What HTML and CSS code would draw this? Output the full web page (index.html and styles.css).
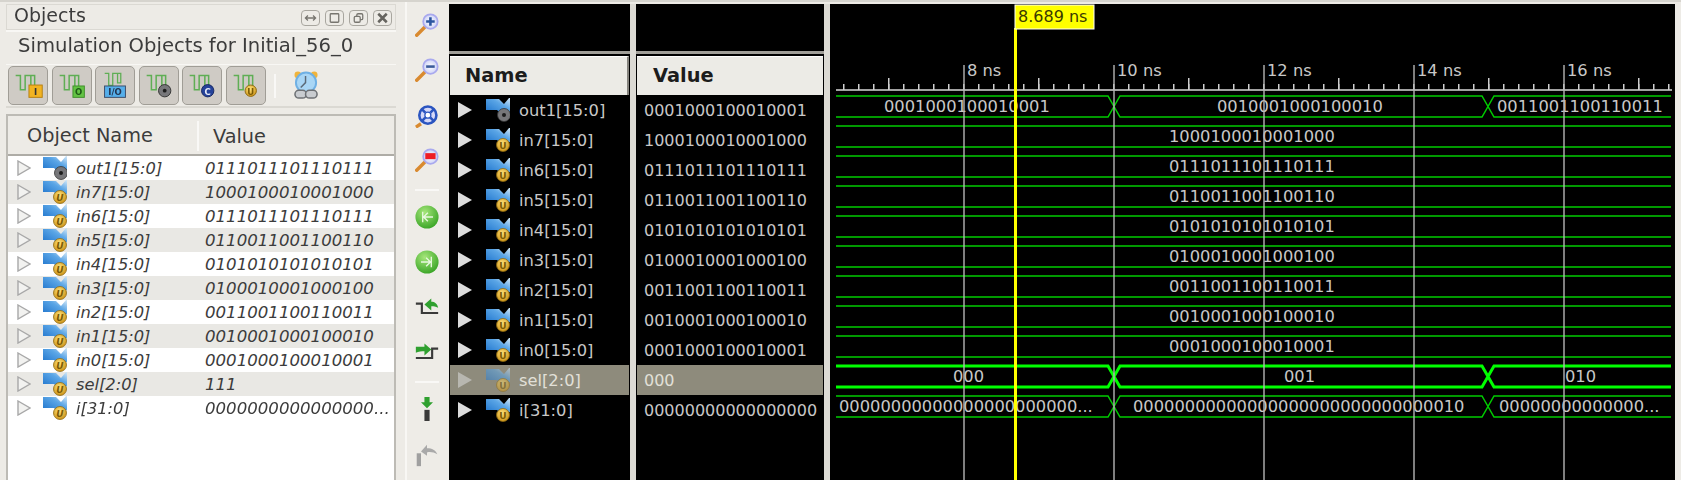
FILE: index.html
```html
<!DOCTYPE html>
<html lang="en">
  <head>
    <meta charset="UTF-8" />
    <title>Objects - waveform</title>
    <link rel="stylesheet" href="styles.css">
  </head>
  <body>
    <div class="app">
      <!-- Objects panel -->
      <section class="objects">
        <header class="title-bar">
          <span class="title">Objects</span>
          <div class="win-btns">
            <button class="win-btn">
              <svg viewBox="0 0 20 16"><path d="M4 8H16M7 5L4 8L7 11M13 5L16 8L13 11" fill="none" stroke="#77756f" stroke-width="1.5" /></svg>
            </button>
            <button class="win-btn">
              <svg viewBox="0 0 20 16"><rect x="5" y="3" width="10" height="10" rx="1" fill="none" stroke="#77756f" stroke-width="1.5" /></svg>
            </button>
            <button class="win-btn">
              <svg viewBox="0 0 20 16"><rect x="8" y="3" width="7" height="7" rx="1.5" fill="none" stroke="#77756f" stroke-width="1.5" /><rect x="5" y="6" width="7" height="7" rx="1.5" fill="#edebe6" stroke="#77756f" stroke-width="1.5" /></svg>
            </button>
            <button class="win-btn">
              <svg viewBox="0 0 20 16"><path d="M5 3L15 13M15 3L5 13" fill="none" stroke="#66645f" stroke-width="3" /></svg>
            </button>
          </div>
        </header>
        <div class="subtitle">Simulation Objects for Initial_56_0</div>

        <div class="filter-bar">
          <button class="filter-btn">
            <svg viewBox="0 0 40 39">
              <use href="#wave-mark" x="6" y="7" width="30" height="26" />
              <rect x="21" y="19" width="14" height="13" fill="#f2b321" stroke="#b57f10" />
              <text x="28" y="30" class="badge-text" fill="#333">I</text>
            </svg>
          </button>
          <button class="filter-btn">
            <svg viewBox="0 0 40 39">
              <use href="#wave-mark" x="6" y="7" width="30" height="26" />
              <rect x="21" y="20" width="12" height="12" fill="#63c344" stroke="#3f8e2a" />
              <text x="27" y="30" class="badge-text" fill="#1f5a16">O</text>
            </svg>
          </button>
          <button class="filter-btn">
            <svg viewBox="0 0 40 39">
              <use href="#wave-mark" x="6" y="5" width="30" height="22" />
              <rect x="9" y="20" width="22" height="12" fill="#55aeea" stroke="#3a4a66" />
              <text x="20" y="30" class="badge-text" fill="#23334f">I/O</text>
            </svg>
          </button>
          <button class="filter-btn">
            <svg viewBox="0 0 40 39">
              <use href="#wave-mark" x="6" y="7" width="30" height="26" />
              <circle cx="26" cy="25" r="6.5" fill="#77777a" stroke="#333" />
              <circle cx="26" cy="25" r="2" fill="#1c1c1c" />
            </svg>
          </button>
          <button class="filter-btn">
            <svg viewBox="0 0 40 39">
              <use href="#wave-mark" x="6" y="7" width="30" height="26" />
              <circle cx="26" cy="25" r="6.5" fill="#25429a" stroke="#15265f" />
              <text x="26" y="29" class="badge-text" fill="#e8ecf8">C</text>
            </svg>
          </button>
          <button class="filter-btn">
            <svg viewBox="0 0 40 39">
              <use href="#wave-mark" x="6" y="7" width="30" height="26" />
              <circle cx="25" cy="25" r="6" fill="url(#gold-fill)" stroke="#8d6a12" />
              <text x="25" y="29" class="badge-text" fill="#7a5a05">U</text>
            </svg>
          </button>
          <span class="filter-sep"></span>
          <svg class="alarm" viewBox="0 0 26 32">
            <circle cx="4" cy="5" r="3.5" fill="#f0b43c" />
            <circle cx="21" cy="5" r="3.5" fill="#f0b43c" />
            <circle cx="12.5" cy="13" r="10.5" fill="#a9d6f5" stroke="#6fb0e4" stroke-width="2" />
            <path d="M12 6V13L7 18" fill="none" stroke="#5b6a78" stroke-width="1.5" />
            <rect x="1" y="21" width="12" height="8" rx="4" fill="#c9ccd0" stroke="#6d7074" stroke-width="1.6" />
            <rect x="12" y="21" width="12" height="8" rx="4" fill="#c9ccd0" stroke="#6d7074" stroke-width="1.6" />
          </svg>
        </div>

        <div class="obj-table">
          <div class="obj-head">
            <span class="obj-head-name">Object Name</span>
            <span class="obj-head-value">Value</span>
          </div>
          <ul class="obj-list">
            <li class="obj-row"><svg class="twisty"><use href="#twisty-hollow" /></svg><svg class="sig"><use href="#sig-out" /></svg><span class="obj-name">out1[15:0]</span><span class="obj-value">0111011101110111</span></li>
            <li class="obj-row"><svg class="twisty"><use href="#twisty-hollow" /></svg><svg class="sig"><use href="#sig-u" /></svg><span class="obj-name">in7[15:0]</span><span class="obj-value">1000100010001000</span></li>
            <li class="obj-row"><svg class="twisty"><use href="#twisty-hollow" /></svg><svg class="sig"><use href="#sig-u" /></svg><span class="obj-name">in6[15:0]</span><span class="obj-value">0111011101110111</span></li>
            <li class="obj-row"><svg class="twisty"><use href="#twisty-hollow" /></svg><svg class="sig"><use href="#sig-u" /></svg><span class="obj-name">in5[15:0]</span><span class="obj-value">0110011001100110</span></li>
            <li class="obj-row"><svg class="twisty"><use href="#twisty-hollow" /></svg><svg class="sig"><use href="#sig-u" /></svg><span class="obj-name">in4[15:0]</span><span class="obj-value">0101010101010101</span></li>
            <li class="obj-row"><svg class="twisty"><use href="#twisty-hollow" /></svg><svg class="sig"><use href="#sig-u" /></svg><span class="obj-name">in3[15:0]</span><span class="obj-value">0100010001000100</span></li>
            <li class="obj-row"><svg class="twisty"><use href="#twisty-hollow" /></svg><svg class="sig"><use href="#sig-u" /></svg><span class="obj-name">in2[15:0]</span><span class="obj-value">0011001100110011</span></li>
            <li class="obj-row"><svg class="twisty"><use href="#twisty-hollow" /></svg><svg class="sig"><use href="#sig-u" /></svg><span class="obj-name">in1[15:0]</span><span class="obj-value">0010001000100010</span></li>
            <li class="obj-row"><svg class="twisty"><use href="#twisty-hollow" /></svg><svg class="sig"><use href="#sig-u" /></svg><span class="obj-name">in0[15:0]</span><span class="obj-value">0001000100010001</span></li>
            <li class="obj-row"><svg class="twisty"><use href="#twisty-hollow" /></svg><svg class="sig"><use href="#sig-u" /></svg><span class="obj-name">sel[2:0]</span><span class="obj-value">111</span></li>
            <li class="obj-row"><svg class="twisty"><use href="#twisty-hollow" /></svg><svg class="sig"><use href="#sig-u" /></svg><span class="obj-name">i[31:0]</span><span class="obj-value">0000000000000000...</span></li>
          </ul>
        </div>
      </section>

      <!-- wave toolbar -->
      <nav class="wave-tools">
        <svg class="tool" viewBox="0 0 28 28"><use href="#lens" width="28" height="28" /><path d="M13 10H23M18 5V15" stroke="#2b55a0" stroke-width="3" /></svg>
        <svg class="tool" viewBox="0 0 28 28"><use href="#lens" width="28" height="28" /><path d="M13 10H23" stroke="#3b5b9a" stroke-width="3" /></svg>
        <svg class="tool" viewBox="0 0 28 28">
          <line x1="1" y1="27" x2="7" y2="23" stroke="#d98a30" stroke-width="4" />
          <circle cx="15" cy="13" r="10" fill="#d5d8f8" stroke="#2b55c0" stroke-width="3" />
          <circle cx="15" cy="13" r="3.5" fill="#fff" stroke="#2b55c0" stroke-width="1.5" />
          <path d="M8 6L12 10M22 6L18 10M8 20L12 16M22 20L18 16" stroke="#2b55c0" stroke-width="3" />
        </svg>
        <svg class="tool" viewBox="0 0 28 28"><use href="#lens" width="28" height="28" /><rect x="12" y="6" width="12" height="7" fill="#ee1c24" /></svg>
        <span class="tool-sep"></span>
        <svg class="tool" viewBox="0 0 28 28"><circle cx="14" cy="14" r="13.5" fill="url(#green-fill)" /><path d="M9 8V20M21 14H10M15 9L10 14L15 19" fill="none" stroke="#e8f8df" stroke-width="1.6" /></svg>
        <svg class="tool" viewBox="0 0 28 28"><circle cx="14" cy="14" r="13.5" fill="url(#green-fill)" /><path d="M19 8V20M7 14H18M13 9L18 14L13 19" fill="none" stroke="#e8f8df" stroke-width="1.6" /></svg>
        <svg class="tool" viewBox="0 0 28 28">
          <path d="M1 10H8V21H27" fill="none" stroke="#3a3a3a" stroke-width="2.5" />
          <path d="M11 11L19 4V8C23 8 26 10 27 15C24 13 22 13 19 13V18Z" fill="#2fa02f" />
        </svg>
        <svg class="tool" viewBox="0 0 28 28">
          <path d="M1 21H20V10H27" fill="none" stroke="#3a3a3a" stroke-width="2.5" />
          <path d="M19 11L11 4V8H1V15C4 13 8 13 11 13V18Z" fill="#2fa02f" />
        </svg>
        <span class="tool-sep"></span>
        <svg class="tool" viewBox="0 0 28 28">
          <path d="M11 0H17V6H21L14 13L7 6H11Z" fill="#2fa02f" />
          <rect x="11" y="15" width="6" height="13" fill="#3a3a3a" />
        </svg>
        <svg class="tool" viewBox="0 0 28 28">
          <rect x="2" y="12" width="5" height="15" fill="#a0a0a0" />
          <path d="M7 10L14 2V6C20 6 24 8 26 13C22 11 18 10 14 11V15Z" fill="#a9a9a9" />
        </svg>
      </nav>

      <!-- wave window -->
      <section class="wave-window">
        <div class="wave-col name-col">
          <div class="col-top"></div>
          <div class="col-head">Name</div>
          <ul class="wave-list">
            <li class="wave-row"><svg class="twisty"><use href="#twisty-solid" /></svg><svg class="sig"><use href="#sig-out" /></svg><span>out1[15:0]</span></li>
            <li class="wave-row"><svg class="twisty"><use href="#twisty-solid" /></svg><svg class="sig"><use href="#sig-u" /></svg><span>in7[15:0]</span></li>
            <li class="wave-row"><svg class="twisty"><use href="#twisty-solid" /></svg><svg class="sig"><use href="#sig-u" /></svg><span>in6[15:0]</span></li>
            <li class="wave-row"><svg class="twisty"><use href="#twisty-solid" /></svg><svg class="sig"><use href="#sig-u" /></svg><span>in5[15:0]</span></li>
            <li class="wave-row"><svg class="twisty"><use href="#twisty-solid" /></svg><svg class="sig"><use href="#sig-u" /></svg><span>in4[15:0]</span></li>
            <li class="wave-row"><svg class="twisty"><use href="#twisty-solid" /></svg><svg class="sig"><use href="#sig-u" /></svg><span>in3[15:0]</span></li>
            <li class="wave-row"><svg class="twisty"><use href="#twisty-solid" /></svg><svg class="sig"><use href="#sig-u" /></svg><span>in2[15:0]</span></li>
            <li class="wave-row"><svg class="twisty"><use href="#twisty-solid" /></svg><svg class="sig"><use href="#sig-u" /></svg><span>in1[15:0]</span></li>
            <li class="wave-row"><svg class="twisty"><use href="#twisty-solid" /></svg><svg class="sig"><use href="#sig-u" /></svg><span>in0[15:0]</span></li>
            <li class="wave-row selected"><svg class="twisty"><use href="#twisty-solid" /></svg><svg class="sig"><use href="#sig-u" /></svg><span>sel[2:0]</span></li>
            <li class="wave-row"><svg class="twisty"><use href="#twisty-solid" /></svg><svg class="sig"><use href="#sig-u" /></svg><span>i[31:0]</span></li>
          </ul>
        </div>

        <div class="wave-col value-col">
          <div class="col-top"></div>
          <div class="col-head">Value</div>
          <ul class="wave-list">
            <li class="wave-row">0001000100010001</li>
            <li class="wave-row">1000100010001000</li>
            <li class="wave-row">0111011101110111</li>
            <li class="wave-row">0110011001100110</li>
            <li class="wave-row">0101010101010101</li>
            <li class="wave-row">0100010001000100</li>
            <li class="wave-row">0011001100110011</li>
            <li class="wave-row">0010001000100010</li>
            <li class="wave-row">0001000100010001</li>
            <li class="wave-row selected">000</li>
            <li class="wave-row">00000000000000000</li>
          </ul>
        </div>

        <!-- waveform canvas, coordinates are page pixels -->
        <svg class="wave-canvas" viewBox="830 4 845 476">
          <line class="ruler" x1="836" y1="90" x2="1672" y2="90" />
          <line class="tick-minor" x1="843" y1="87" x2="1672" y2="87" />
          <line class="tick-major" x1="888" y1="84" x2="1672" y2="84" />

          <path class="bus" d="M836 96H1108L1120 117H1482L1494 96H1671M836 117H1108L1120 96H1482L1494 117H1671" />
          <path class="bus" d="M836 126H1671M836 147H1671M836 156H1671M836 177H1671M836 186H1671M836 207H1671M836 216H1671M836 237H1671M836 246H1671M836 267H1671M836 276H1671M836 297H1671M836 306H1671M836 327H1671M836 336H1671M836 357H1671" />
          <path class="bus bus-selected" d="M836 366H1108L1120 387H1482L1494 366H1671M836 387H1108L1120 366H1482L1494 387H1671" />
          <path class="bus" d="M836 396H1108L1120 417H1482L1494 396H1671M836 417H1108L1120 396H1482L1494 417H1671" />

          <text class="wave-text" x="884" y="112">0001000100010001</text>
          <text class="wave-text" x="1217" y="112">0010001000100010</text>
          <text class="wave-text" x="1497" y="112">0011001100110011</text>
          <text class="wave-text" x="1169" y="142">1000100010001000</text>
          <text class="wave-text" x="1169" y="172">0111011101110111</text>
          <text class="wave-text" x="1169" y="202">0110011001100110</text>
          <text class="wave-text" x="1169" y="232">0101010101010101</text>
          <text class="wave-text" x="1169" y="262">0100010001000100</text>
          <text class="wave-text" x="1169" y="292">0011001100110011</text>
          <text class="wave-text" x="1169" y="322">0010001000100010</text>
          <text class="wave-text" x="1169" y="352">0001000100010001</text>
          <text class="wave-text" x="953" y="382">000</text>
          <text class="wave-text" x="1284" y="382">001</text>
          <text class="wave-text" x="1565" y="382">010</text>
          <text class="wave-text" x="839" y="412">00000000000000000000000...</text>
          <text class="wave-text" x="1133" y="412">00000000000000000000000000000010</text>
          <text class="wave-text" x="1499" y="412">00000000000000...</text>

          <path class="grid" d="M964 65V480M1114 65V480M1264 65V480M1414 65V480M1564 65V480" />
          <text class="wave-text" x="967" y="76">8 ns</text>
          <text class="wave-text" x="1117" y="76">10 ns</text>
          <text class="wave-text" x="1267" y="76">12 ns</text>
          <text class="wave-text" x="1417" y="76">14 ns</text>
          <text class="wave-text" x="1567" y="76">16 ns</text>

          <line class="cursor" x1="1015.5" y1="28" x2="1015.5" y2="480" />
          <rect class="cursor-box" x="1015" y="5" width="79" height="24" />
          <text class="cursor-text" x="1018" y="22">8.689 ns</text>
        </svg>
      </section>
    </div>

    <!-- shared icons -->
    <svg class="icon-defs" xmlns="http://www.w3.org/2000/svg">
      <defs>
        <linearGradient id="blue-fill" x1="0" y1="1" x2="1" y2="0">
          <stop offset="0" stop-color="#1f74cc" />
          <stop offset="0.6" stop-color="#5aa5e6" />
          <stop offset="1" stop-color="#d6e9f8" />
        </linearGradient>
        <radialGradient id="gold-fill" cx="0.45" cy="0.35" r="0.7">
          <stop offset="0" stop-color="#ffe27a" />
          <stop offset="1" stop-color="#c98d10" />
        </radialGradient>
        <radialGradient id="green-fill" cx="0.4" cy="0.3" r="0.8">
          <stop offset="0" stop-color="#a5e67a" />
          <stop offset="1" stop-color="#2f9e1e" />
        </radialGradient>
        <radialGradient id="lens-fill" cx="0.5" cy="0.5" r="0.55">
          <stop offset="0" stop-color="#ffffff" />
          <stop offset="1" stop-color="#c8cdf5" />
        </radialGradient>
      </defs>
      <symbol id="twisty-hollow" viewBox="0 0 14 16">
        <polygon points="1,1 13,8 1,15" fill="#f2f2f0" stroke="#a8a8a8" stroke-width="1.4" />
      </symbol>
      <symbol id="twisty-solid" viewBox="0 0 14 16">
        <polygon points="0,0 14,8 0,16" fill="#dcdcdc" />
      </symbol>
      <symbol id="sig-base" viewBox="0 0 24 24">
        <polygon points="0,1 13,1 18,6 23,0 24,0 24,14 14,15 11,12 0,12" fill="url(#blue-fill)" />
      </symbol>
      <symbol id="sig-u" viewBox="0 0 24 24">
        <use href="#sig-base" width="24" height="24" />
        <circle cx="17" cy="17" r="6.5" fill="url(#gold-fill)" stroke="#8d6a12" stroke-width="0.8" />
        <text x="17" y="20.5" class="badge-text" fill="#7a5a05">U</text>
      </symbol>
      <symbol id="sig-out" viewBox="0 0 24 24">
        <use href="#sig-base" width="24" height="24" />
        <circle cx="18" cy="17" r="6.5" fill="#77777a" stroke="#333" stroke-width="0.8" />
        <circle cx="18" cy="17" r="2" fill="#1c1c1c" />
      </symbol>
      <symbol id="wave-mark" viewBox="0 0 30 26">
        <polyline points="1,2 6,2 6,17 11,17 11,2 21,2 21,14 17,14 17,2" fill="none" stroke="#5fae55" stroke-width="1.6" />
      </symbol>
      <symbol id="lens" viewBox="0 0 28 28">
        <line x1="2" y1="26" x2="11" y2="17" stroke="#d98a30" stroke-width="4" stroke-linecap="round" />
        <circle cx="18" cy="10" r="8.5" fill="url(#lens-fill)" stroke="#a9a9ee" stroke-width="2" />
      </symbol>
    </svg>
  </body>
</html>
```

FILE: styles.css
```css
* {
  box-sizing: border-box;
}

body {
  margin: 0;
  width: 1681px;
  height: 480px;
  overflow: hidden;
  background-color: #edebe6;
  border-top: 2px solid #d6d4ce;
  font-family: "DejaVu Sans", sans-serif;
  color: #3c3c3c;
}

ul {
  list-style: none;
  margin: 0;
  padding: 0;
}

.icon-defs {
  display: block;
  width: 0;
  height: 0;
}

/* screenshot is slightly soft, keep the same look */
.app {
  display: flex;
  height: 478px;
  padding-top: 2px;
  filter: blur(0.45px);
}

/* Objects panel */
.objects {
  display: flex;
  flex-direction: column;
  width: 390px;
  margin-left: 6px;
}

.title-bar {
  display: flex;
  justify-content: space-between;
  align-items: center;
  height: 26px;
  padding: 0 3px 4px 7px;
  border: 1px solid #dbd9d3;
  font-size: 19px;
}

.win-btns {
  display: flex;
  gap: 5px;
  margin-top: 6px;
}

.win-btn {
  width: 19px;
  height: 16px;
  padding: 0;
  border: 1px solid #a8a69f;
  border-radius: 4px;
  background-color: #edebe6;
}

.win-btn svg {
  display: block;
  width: 100%;
  height: 100%;
}

.subtitle {
  height: 34px;
  padding: 0 0 0 12px;
  border-top: 2px solid #f8f7f4;
  font-size: 19.6px;
  line-height: 27px;
  white-space: nowrap;
}

.filter-bar {
  display: flex;
  align-items: center;
  gap: 3.5px;
  height: 44px;
  padding: 0 2px;
  border-top: 1px solid #f8f7f4;
  border-bottom: 2px solid #dbd9d3;
}

.filter-btn {
  flex: none;
  width: 40px;
  height: 39px;
  padding: 0;
  border: 1px solid #a09d96;
  border-radius: 5px;
  background-color: #cfcbc5;
}

.filter-btn svg {
  display: block;
  width: 100%;
  height: 100%;
}

.filter-sep {
  width: 2px;
  height: 24px;
  margin: 0 14px 0 5px;
  background-color: #f9f8f6;
}

.alarm {
  width: 25px;
  height: 31px;
}

.badge-text {
  font-family: "DejaVu Sans", sans-serif;
  font-size: 9px;
  font-weight: bold;
  text-anchor: middle;
}

.obj-table {
  flex: 1;
  margin-top: 6px;
  background-color: #ffffff;
  border: 2px solid #bdbbb5;
  border-bottom: 0;
}

.obj-head {
  display: flex;
  align-items: center;
  height: 40px;
  padding-top: 2px;
  background-color: #edebe6;
  border-bottom: 2px solid #aeaca6;
  font-size: 19.3px;
}

.obj-head-name {
  width: 191px;
  padding-left: 19px;
  border-right: 2px solid #f9f8f6;
  line-height: 30px;
}

.obj-head-value {
  padding-left: 14px;
}

.obj-row {
  display: flex;
  align-items: center;
  height: 24px;
  font-size: 16.3px;
  font-style: italic;
}

.obj-row:nth-child(even) {
  background-color: #e9e8e4;
}

.obj-value {
  font-size: 16.6px;
}

.twisty {
  flex: none;
  width: 14px;
  height: 16px;
}

.obj-row .twisty {
  margin-left: 9px;
}

.obj-row .sig {
  flex: none;
  width: 24px;
  height: 24px;
  margin-left: 12px;
}

.obj-name {
  width: 129px;
  margin-left: 9px;
}

/* wave toolbar, tracks are set so icons land where they do in the tool */
.wave-tools {
  display: grid;
  grid-template-rows: 45px 46px 45px 44px 16px 38px 52px 37px 53px 8px 46px 46px;
  justify-items: center;
  align-items: center;
  flex: none;
  width: 44px;
  height: 478px;
  margin-left: 9px;
  margin-top: -2px;
  padding-right: 3px;
  background-color: #eeece7;
  border-left: 2px solid #f8f7f4;
}

.tool {
  width: 24px;
  height: 24px;
}

.tool-sep {
  width: 24px;
  height: 2px;
  background-color: #f9f8f6;
}

/* wave window */
.wave-window {
  display: flex;
  flex: none;
  width: 1226px;
  background-color: #dcdad4;
}

.wave-col {
  display: flex;
  flex-direction: column;
  background-color: #000000;
}

.name-col {
  width: 181px;
  margin-right: 6px;
}

.value-col {
  width: 188px;
  margin-right: 6px;
}

.col-top {
  height: 50px;
  border-bottom: 3px solid #a09e98;
}

.col-head {
  flex: none;
  height: 39px;
  margin: 2px 1px 0;
  background-color: #ecebe6;
  color: #1c1c1c;
  font-size: 19.4px;
  font-weight: bold;
  line-height: 37px;
  border-top: 1px solid #ffffff;
}

.name-col .col-head {
  padding-left: 15px;
  border-right: 2px solid #85837d;
}

.value-col .col-head {
  padding-left: 16px;
}

.wave-list {
  flex: 1;
}

.wave-row {
  display: flex;
  align-items: center;
  height: 30px;
  margin: 0 1px;
  overflow: hidden;
  color: #c8c8c8;
  font-size: 16.3px;
  white-space: nowrap;
}

.value-col .wave-row {
  padding-left: 7px;
  font-size: 16px;
}

.wave-row .twisty {
  margin-left: 8px;
}

.wave-row .sig {
  flex: none;
  width: 24px;
  height: 24px;
  margin-left: 14px;
  margin-right: 9px;
}

.wave-row.selected {
  background-color: #8e8b7c;
  color: #e2e0d8;
}

.wave-row.selected .sig,
.wave-row.selected .twisty {
  opacity: 0.55;
}

/* waveform canvas */
.wave-canvas {
  display: block;
  flex: none;
  width: 845px;
  height: 476px;
  background-color: #000000;
}

.ruler {
  stroke: #d8d8d8;
  stroke-width: 1.5;
}

.tick-minor {
  stroke: #d0d0d0;
  stroke-width: 6;
  stroke-dasharray: 1.5 13.5;
}

.tick-major {
  stroke: #d0d0d0;
  stroke-width: 12;
  stroke-dasharray: 1.5 148.5;
}

.bus {
  fill: none;
  stroke: #00cc00;
  stroke-width: 1.5;
}

.bus-selected {
  stroke: #00ff00;
  stroke-width: 3;
}

.grid {
  fill: none;
  stroke: #b4b4b4;
  stroke-width: 1.4;
}

.wave-text {
  fill: #c8c8c8;
  font-family: "DejaVu Sans", sans-serif;
  font-size: 16.3px;
}

.cursor {
  stroke: #ffff00;
  stroke-width: 3;
}

.cursor-box {
  fill: #ffff00;
  stroke: #ffffff;
  stroke-width: 1;
}

.cursor-text {
  fill: #3a3a00;
  font-family: "DejaVu Sans", sans-serif;
  font-size: 16px;
}
```
